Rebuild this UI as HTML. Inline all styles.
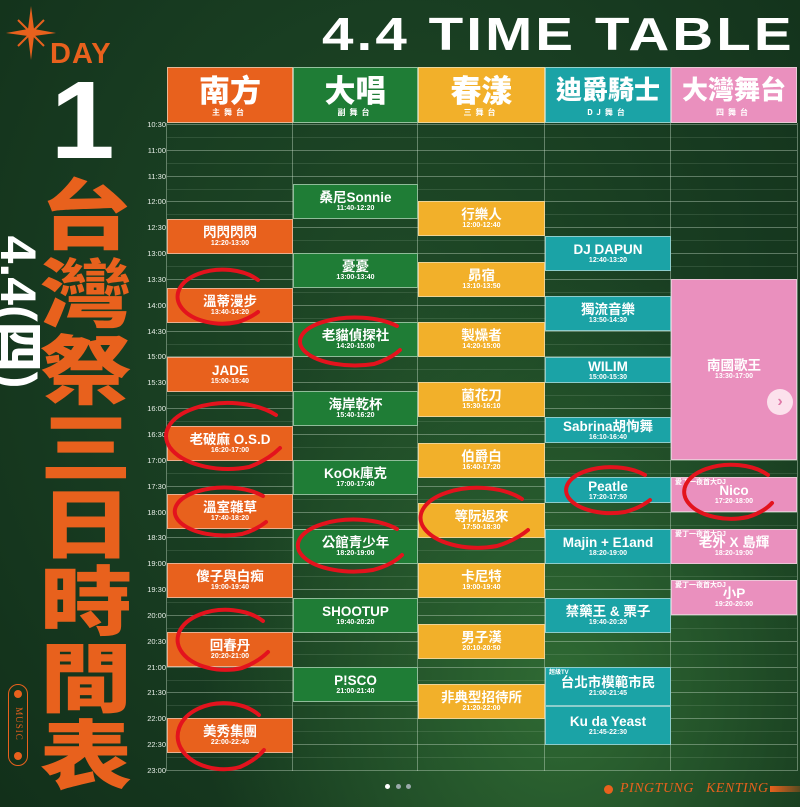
<!DOCTYPE html>
<html><head><meta charset="utf-8"><style>
*{margin:0;padding:0;box-sizing:border-box}
body{width:800px;height:807px;overflow:hidden;position:relative;font-family:"Liberation Sans","Noto Sans CJK TC",sans-serif;
background:radial-gradient(ellipse at 70% 85%,#2f6a33 0%,rgba(40,90,45,0) 45%),radial-gradient(ellipse at 50% 40%,#1f4a27 0%,#173a20 60%,#12301a 100%);}
.a{position:absolute}
.t{position:absolute;left:140px;width:26px;font-size:7.5px;color:#e8efe8;text-align:right}
.hl{position:absolute;left:167px;width:630px;height:1px;background:rgba(210,230,210,.38)}
.ql{position:absolute;left:167px;width:630px;height:1px;background:rgba(210,230,210,.13)}
.vl{position:absolute;top:123px;width:1px;height:648px;background:rgba(210,230,210,.4)}
.h{position:absolute;top:67px;height:56px;color:#fff;text-align:center;border:1px solid rgba(230,240,230,.6)}
.h b{display:block;font-family:"Noto Sans CJK TC",sans-serif;font-weight:900;font-size:31px;line-height:36px;margin-top:3px}
.h b.s{font-size:26px}
.h i{display:block;font-style:normal;font-weight:700;font-size:8px;letter-spacing:4px;font-family:"Noto Sans CJK TC",sans-serif}
.e{position:absolute;color:#fff;text-align:center;display:flex;flex-direction:column;justify-content:center;border:1px solid rgba(235,240,235,.55)}
.e b{font-family:"Liberation Sans","Noto Sans CJK TC",sans-serif;font-weight:700;font-size:13.5px;line-height:15px}
.e i{font-style:normal;font-size:7px;line-height:8px;font-weight:700}
.o{background:#e8611d}.g{background:#1f7d36}.y{background:#f2b02a}.c{background:#1ba3a6}.p{background:#ea90be}
.c1{left:167px;width:126px}.c2{left:293px;width:125px}.c3{left:418px;width:127px}.c4{left:545px;width:126px}.c5{left:671px;width:126px}
.sm{position:absolute;left:3px;top:1px;font-size:5px;color:#fff;font-style:normal}
.big{position:absolute;left:38px;width:96px;font-family:"Noto Sans CJK TC",sans-serif;font-weight:900;color:#e8611d;font-size:92px;text-align:center;line-height:77px;height:77px;transform:scaleY(.82)}
</style></head><body>
<svg class="a" style="left:4px;top:4px" width="54" height="58" viewBox="0 0 54 58"><path d="M27 2 L30 25 L52 29 L30 32 L27 56 L24 32 L2 29 L24 25 Z" fill="#e8611d"/><path d="M27 29 L40 16 M27 29 L14 16 M27 29 L40 42 M27 29 L14 42" stroke="#e8611d" stroke-width="2"/></svg>
<div class="a" style="left:50px;top:38px;font-size:29px;font-weight:900;color:#e8611d;font-family:'Liberation Sans';letter-spacing:1px">DAY</div>
<div class="a" style="left:52px;top:66px;font-size:110px;font-weight:900;color:#fff;font-family:'Liberation Sans';line-height:110px;transform:scaleX(1.05)">1</div>
<div class="big" style="top:172px">台</div>
<div class="big" style="top:250px">灣</div>
<div class="big" style="top:327px">祭</div>
<div class="big" style="top:404px">三</div>
<div class="big" style="top:481px">日</div>
<div class="big" style="top:558px">時</div>
<div class="big" style="top:635px">間</div>
<div class="big" style="top:712px">表</div>
<div class="a" style="left:-82px;top:287px;width:200px;height:50px;transform:rotate(90deg);color:#fff;font-weight:900;font-size:50px;line-height:50px;font-family:'Liberation Sans','Noto Sans CJK TC',sans-serif;text-align:center">4.4(四)</div>
<div class="a" style="left:8px;top:684px;width:20px;height:82px;border:1.5px solid #e8611d;border-radius:10px"></div>
<div class="a" style="left:-14px;top:718px;width:64px;height:12px;transform:rotate(90deg);font-size:9px;color:#e8611d;font-family:'Liberation Serif';text-align:center;letter-spacing:1px">MUSIC</div>
<div class="a" style="left:14px;top:690px;width:8px;height:8px;border-radius:4px;background:#e8611d"></div>
<div class="a" style="left:14px;top:752px;width:8px;height:8px;border-radius:4px;background:#e8611d"></div>
<div class="a" style="left:322px;top:9px;font-size:46px;font-weight:900;color:#fff;font-family:'Liberation Sans';letter-spacing:2.5px;line-height:50px;transform:scaleX(1.23);transform-origin:left;white-space:nowrap">4.4 TIME TABLE</div>
<div class="h o c1"><b>南方</b><i>主舞台</i></div>
<div class="h g c2"><b>大唱</b><i>副舞台</i></div>
<div class="h y c3"><b>春漾</b><i>三舞台</i></div>
<div class="h c c4"><b class="s">迪爵騎士</b><i>DJ舞台</i></div>
<div class="h p c5"><b class="s">大灣舞台</b><i>四舞台</i></div>
<div class="hl" style="top:124px"></div><div class="ql" style="top:137px"></div>
<div class="hl" style="top:150px"></div><div class="ql" style="top:163px"></div>
<div class="hl" style="top:176px"></div><div class="ql" style="top:189px"></div>
<div class="hl" style="top:201px"></div><div class="ql" style="top:214px"></div>
<div class="hl" style="top:227px"></div><div class="ql" style="top:240px"></div>
<div class="hl" style="top:253px"></div><div class="ql" style="top:266px"></div>
<div class="hl" style="top:279px"></div><div class="ql" style="top:292px"></div>
<div class="hl" style="top:305px"></div><div class="ql" style="top:318px"></div>
<div class="hl" style="top:331px"></div><div class="ql" style="top:344px"></div>
<div class="hl" style="top:356px"></div><div class="ql" style="top:369px"></div>
<div class="hl" style="top:382px"></div><div class="ql" style="top:395px"></div>
<div class="hl" style="top:408px"></div><div class="ql" style="top:421px"></div>
<div class="hl" style="top:434px"></div><div class="ql" style="top:447px"></div>
<div class="hl" style="top:460px"></div><div class="ql" style="top:473px"></div>
<div class="hl" style="top:486px"></div><div class="ql" style="top:499px"></div>
<div class="hl" style="top:512px"></div><div class="ql" style="top:525px"></div>
<div class="hl" style="top:537px"></div><div class="ql" style="top:550px"></div>
<div class="hl" style="top:563px"></div><div class="ql" style="top:576px"></div>
<div class="hl" style="top:589px"></div><div class="ql" style="top:602px"></div>
<div class="hl" style="top:615px"></div><div class="ql" style="top:628px"></div>
<div class="hl" style="top:641px"></div><div class="ql" style="top:654px"></div>
<div class="hl" style="top:667px"></div><div class="ql" style="top:680px"></div>
<div class="hl" style="top:692px"></div><div class="ql" style="top:705px"></div>
<div class="hl" style="top:718px"></div><div class="ql" style="top:731px"></div>
<div class="hl" style="top:744px"></div><div class="ql" style="top:757px"></div>
<div class="hl" style="top:770px"></div>
<div class="vl" style="left:166px"></div><div class="vl" style="left:292px"></div><div class="vl" style="left:417px"></div><div class="vl" style="left:544px"></div><div class="vl" style="left:670px"></div><div class="vl" style="left:797px"></div>
<div class="t" style="top:120px">10:30</div><div class="t" style="top:146px">11:00</div><div class="t" style="top:172px">11:30</div><div class="t" style="top:197px">12:00</div><div class="t" style="top:223px">12:30</div><div class="t" style="top:249px">13:00</div><div class="t" style="top:275px">13:30</div><div class="t" style="top:301px">14:00</div><div class="t" style="top:327px">14:30</div><div class="t" style="top:352px">15:00</div><div class="t" style="top:378px">15:30</div><div class="t" style="top:404px">16:00</div><div class="t" style="top:430px">16:30</div><div class="t" style="top:456px">17:00</div><div class="t" style="top:482px">17:30</div><div class="t" style="top:508px">18:00</div><div class="t" style="top:533px">18:30</div><div class="t" style="top:559px">19:00</div><div class="t" style="top:585px">19:30</div><div class="t" style="top:611px">20:00</div><div class="t" style="top:637px">20:30</div><div class="t" style="top:663px">21:00</div><div class="t" style="top:688px">21:30</div><div class="t" style="top:714px">22:00</div><div class="t" style="top:740px">22:30</div><div class="t" style="top:766px">23:00</div>
<div class="e o c1" style="top:219px;height:35px"><b>閃閃閃閃</b><i>12:20-13:00</i></div>
<div class="e o c1" style="top:288px;height:35px"><b>溫蒂漫步</b><i>13:40-14:20</i></div>
<div class="e o c1" style="top:357px;height:35px"><b>JADE</b><i>15:00-15:40</i></div>
<div class="e o c1" style="top:426px;height:35px"><b>老破麻 O.S.D</b><i>16:20-17:00</i></div>
<div class="e o c1" style="top:494px;height:35px"><b>溫室雜草</b><i>17:40-18:20</i></div>
<div class="e o c1" style="top:563px;height:35px"><b>傻子與白痴</b><i>19:00-19:40</i></div>
<div class="e o c1" style="top:632px;height:35px"><b>回春丹</b><i>20:20-21:00</i></div>
<div class="e o c1" style="top:718px;height:35px"><b>美秀集團</b><i>22:00-22:40</i></div>
<div class="e g c2" style="top:184px;height:35px"><b>桑尼Sonnie</b><i>11:40-12:20</i></div>
<div class="e g c2" style="top:253px;height:35px"><b>憂憂</b><i>13:00-13:40</i></div>
<div class="e g c2" style="top:322px;height:35px"><b>老貓偵探社</b><i>14:20-15:00</i></div>
<div class="e g c2" style="top:391px;height:35px"><b>海岸乾杯</b><i>15:40-16:20</i></div>
<div class="e g c2" style="top:460px;height:35px"><b>KoOk庫克</b><i>17:00-17:40</i></div>
<div class="e g c2" style="top:529px;height:35px"><b>公館青少年</b><i>18:20-19:00</i></div>
<div class="e g c2" style="top:598px;height:35px"><b>SHOOTUP</b><i>19:40-20:20</i></div>
<div class="e g c2" style="top:667px;height:35px"><b>P!SCO</b><i>21:00-21:40</i></div>
<div class="e y c3" style="top:201px;height:35px"><b>行樂人</b><i>12:00-12:40</i></div>
<div class="e y c3" style="top:262px;height:35px"><b>昴宿</b><i>13:10-13:50</i></div>
<div class="e y c3" style="top:322px;height:35px"><b>製燥者</b><i>14:20-15:00</i></div>
<div class="e y c3" style="top:382px;height:35px"><b>菌花刀</b><i>15:30-16:10</i></div>
<div class="e y c3" style="top:443px;height:35px"><b>伯爵白</b><i>16:40-17:20</i></div>
<div class="e y c3" style="top:503px;height:35px"><b>等阮返來</b><i>17:50-18:30</i></div>
<div class="e y c3" style="top:563px;height:35px"><b>卡尼特</b><i>19:00-19:40</i></div>
<div class="e y c3" style="top:624px;height:35px"><b>男子漢</b><i>20:10-20:50</i></div>
<div class="e y c3" style="top:684px;height:35px"><b>非典型招待所</b><i>21:20-22:00</i></div>
<div class="e c c4" style="top:236px;height:35px"><b>DJ DAPUN</b><i>12:40-13:20</i></div>
<div class="e c c4" style="top:296px;height:35px"><b>獨流音樂</b><i>13:50-14:30</i></div>
<div class="e c c4" style="top:357px;height:26px"><b>WILIM</b><i>15:00-15:30</i></div>
<div class="e c c4" style="top:417px;height:26px"><b>Sabrina胡恂舞</b><i>16:10-16:40</i></div>
<div class="e c c4" style="top:477px;height:26px"><b>Peatle</b><i>17:20-17:50</i></div>
<div class="e c c4" style="top:529px;height:35px"><b>Majin + E1and</b><i>18:20-19:00</i></div>
<div class="e c c4" style="top:598px;height:35px"><b>禁藥王 &amp; 栗子</b><i>19:40-20:20</i></div>
<div class="e c c4" style="top:667px;height:39px"><i class="sm" style="font-size:6px">超級TV</i><b>台北市模範市民</b><i>21:00-21:45</i></div>
<div class="e c c4" style="top:706px;height:39px"><b>Ku da Yeast</b><i>21:45-22:30</i></div>
<div class="e p c5" style="top:279px;height:181px"><b>南國歌王</b><i>13:30-17:00</i></div>
<div class="e p c5" style="top:477px;height:35px"><i class="sm">愛丁一夜首大DJ</i><b>Nico</b><i>17:20-18:00</i></div>
<div class="e p c5" style="top:529px;height:35px"><i class="sm">愛丁一夜首大DJ</i><b>老外 X 島輝</b><i>18:20-19:00</i></div>
<div class="e p c5" style="top:580px;height:35px"><i class="sm">愛丁一夜首大DJ</i><b>小P</b><i>19:20-20:00</i></div>
<div class="a" style="left:767px;top:389px;width:26px;height:26px;border-radius:13px;background:rgba(255,240,245,.85);color:#e07aa8;font-size:16px;font-weight:700;text-align:center;line-height:25px">›</div>
<svg class="a" style="left:0;top:0" width="800" height="807" fill="none" stroke="#e3131d" stroke-width="4" stroke-linecap="round">
<path d="M258 280 A45 27 0 1 0 238 322 Q250 318 258 312"/>
<path d="M397 326 A55 24 0 1 0 374 364 Q392 358 400 350"/>
<path d="M276 415 A62 33 0 1 0 249 467 Q268 460 280 448"/>
<path d="M263 496 A50 24 0 1 0 242 534 Q256 530 266 522"/>
<path d="M397 529 A56 26 0 1 0 373 570 Q392 565 402 555"/>
<path d="M522 499 A57 30 0 1 0 497 546 Q516 540 528 530"/>
<path d="M645 475 A45 23 0 1 0 625 512 Q640 508 650 500"/>
<path d="M768 475 A47 27 0 1 0 748 517 Q764 512 772 503"/>
<path d="M263 621 A48 30 0 1 0 242 668 Q258 662 268 652"/>
<path d="M259 715 A46 33 0 1 0 240 767 Q256 760 264 750"/>
</svg>
<div class="a" style="left:385px;top:784px;width:5px;height:5px;border-radius:3px;background:#fff"></div>
<div class="a" style="left:396px;top:784px;width:5px;height:5px;border-radius:3px;background:#9aa"></div>
<div class="a" style="left:406px;top:784px;width:5px;height:5px;border-radius:3px;background:#9aa"></div>
<div class="a" style="left:604px;top:785px;width:9px;height:9px;border-radius:5px;background:#e8611d"></div>
<div class="a" style="left:620px;top:781px;font-family:'Liberation Serif';font-style:italic;font-size:14px;color:#e8611d;letter-spacing:.5px">PINGTUNG &nbsp; KENTING</div>
<div class="a" style="left:770px;top:786px;width:30px;height:6px;background:linear-gradient(90deg,#e8611d,rgba(232,97,29,.3))"></div>
</body></html>
